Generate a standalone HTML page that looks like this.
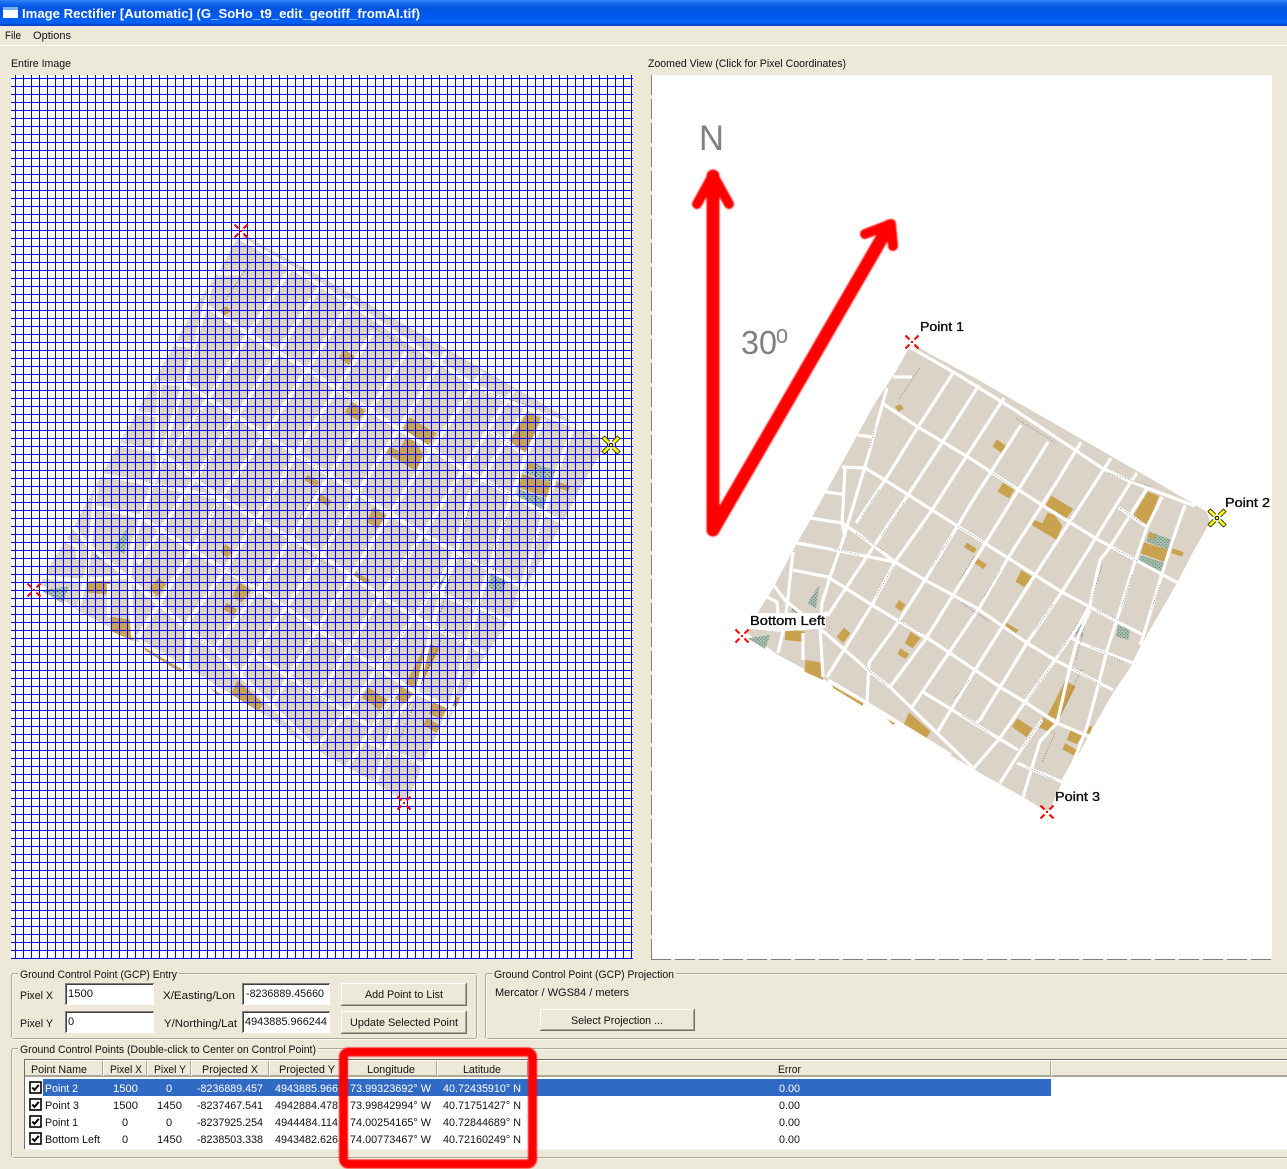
<!DOCTYPE html>
<html><head><meta charset="utf-8"><title>Image Rectifier</title>
<style>
html,body{margin:0;padding:0;background:#ece9d8;width:1287px;height:1169px;overflow:hidden}
svg{display:block}
text{font-family:"Liberation Sans",sans-serif;font-size:11px;fill:#111}
.w{fill:#fff}
</style></head><body>
<svg xmlns="http://www.w3.org/2000/svg" width="1287" height="1169" viewBox="0 0 1287 1169">
<defs>
<linearGradient id="tb" x1="0" y1="0" x2="0" y2="1">
<stop offset="0" stop-color="#2f86f5"/><stop offset=".1" stop-color="#1a6ff0"/><stop offset=".3" stop-color="#0054e0"/><stop offset=".6" stop-color="#0058ec"/><stop offset=".88" stop-color="#0063fa"/><stop offset=".94" stop-color="#0049d0"/><stop offset="1" stop-color="#0040c0"/>
</linearGradient>
<pattern id="grid" patternUnits="userSpaceOnUse" x="15" y="78" width="8" height="8" shape-rendering="crispEdges">
<rect x="0" y="0" width="1" height="8" fill="#0000ff"/><rect x="0" y="0" width="8" height="1" fill="#0000ff"/>
</pattern>
<pattern id="dots" patternUnits="userSpaceOnUse" width="10" height="10">
<rect width="10" height="10" fill="#a9c0b0"/><circle cx="3" cy="3" r="1.4" fill="#2f4f44"/><circle cx="8" cy="8" r="1.4" fill="#2f4f44"/>
</pattern>
<filter id="bl" x="-10%" y="-10%" width="120%" height="120%"><feGaussianBlur stdDeviation=".7"/></filter>
<g id="map">
<path fill="#dcd3c8" d="M908 350L895 373L885 388L875 403L842 463L812 517L797 543L772 590L755 617L747 633L778 655L825 680L980 773L998 783L1023 797L1047 812L1052 805L1062 782L1073 765L1090 733L1113 693L1130 668L1137 653L1147 635L1177 583L1193 552L1210 522L1207 512L1153 480L975 378L928 353L915 345Z"/>
<g transform="matrix(.351 0 0 .3333 730 310)">
<g fill="#c9a24f">
<path d="M470 290L485 282L495 295L480 305Z"/><path d="M760 388L790 410L775 430L748 410Z"/><path d="M778 518L810 540L795 565L762 545Z"/><path d="M915 557L978 597L955 630L897 590Z"/><path d="M905 608L925 615L947 648L930 690L860 645L868 630L890 640Z"/><path d="M1190 545L1222 558L1190 650L1150 615Z"/><path d="M1260 715L1293 727L1288 740L1258 730Z"/><path d="M675 698L703 716L695 730L667 712Z"/><path d="M700 742L732 764L722 777L692 757Z"/><path d="M830 780L860 800L838 832L813 815Z"/><path d="M785 937L822 960L812 972L780 950Z"/><path d="M482 870L500 885L487 905L470 890Z"/><path d="M325 953L343 970L322 1000L304 980Z"/><path d="M515 965L543 985L520 1015L498 1000Z"/><path d="M485 1015L510 1032L500 1047L477 1032Z"/><path d="M158 957L213 965L210 996L157 990Z"/><path d="M215 1050L262 1058L265 1110L212 1085Z"/><path d="M290 1125L380 1180L378 1188L295 1135Z"/><path d="M445 1225L470 1240L465 1245Z"/><path d="M510 1207L572 1265L558 1287L494 1245Z"/><path d="M955 1112L985 1130L935 1230L905 1215Z"/><path d="M818 1225L862 1255L845 1282L803 1250Z"/><path d="M893 1222L930 1245L915 1270L880 1252Z"/><path d="M970 1260L1003 1278L988 1303L960 1290Z"/><path d="M955 1300L988 1320L978 1337L947 1318Z"/><path d="M1020 1248L1032 1250L1025 1272L1015 1270Z"/>
</g>
<g fill="url(#dots)">
<path d="M1195 665L1260 690L1250 720L1185 695Z"/><path d="M1170 735L1240 760L1230 785L1165 755Z"/><path d="M1105 945L1140 960L1135 990L1100 980Z"/><path d="M255 825L245 895L220 880Z"/><path d="M50 985L115 975L100 1017Z"/><path d="M985 950L1005 940L1005 980L985 978Z"/><path d="M178 890L195 910L175 905Z"/>
</g>
<path fill="#c9a24f" d="M1180 697L1250 720L1240 757L1170 730Z"/><path fill="#c9a24f" d="M1190 670L1212 672L1210 687L1190 683Z"/>
</g>
<g fill="none" stroke="#fff" stroke-width="3.2" stroke-linejoin="round">
<path d="M908 346L955 373L1015 410L1102 468L1127 480L1150 489L1195 506"/>
<path d="M882 403L918 427L968 457L1042 505L1095 538L1178 583"/>
<path d="M842 467L865 468L885 480L932 510L975 537L1008 558L1035 575L1062 592L1090 607L1143 635"/>
<path d="M797 543L835 550L895 562L925 580L975 607L1027 643L1055 660L1113 690"/>
<path d="M1070 637L1080 643L1133 663"/>
<path d="M793 570L828 577L872 605L935 643L975 670L1000 687L1025 702L1057 723L1090 737"/>
<path d="M772 583L785 600L825 633L845 650L868 670L891 688L937 733L972 767"/>
<path d="M923 692L980 727L1018 750"/>
<path d="M1017 763L1062 782"/>
<path d="M828 680L867 703L951 755"/>
<path d="M1118 507L1147 527"/>
<path d="M953 373L918 427L885 480L856 523"/>
<path d="M979 385L942 443L908 495L878 540L828 615L825 612"/>
<path d="M1004 398L975 443L932 510L895 562L872 605L827 677"/>
<path d="M1021 425L975 497L925 580L895 627L869 663L867 703"/>
<path d="M1048 442L952 597L925 640L890 687"/>
<path d="M1081 442L1058 480L1008 558L980 607L912 707"/>
<path d="M1111 458L1097 480L1035 575L980 662L937 733"/>
<path d="M1137 473L1130 483L1062 592L1027 643L980 720L976 723"/>
<path d="M1148 487L1108 550L1100 560L1090 605L1080 623L1055 660L1025 702L1000 738L972 770"/>
<path d="M1090 610L1078 637L1070 667L1057 723L1040 741L1023 797"/>
<path d="M1162 497L1147 527L1133 567L1120 610L1108 647L1097 690L1087 727L1073 763L1062 782"/>
<path d="M1185 505L1172 542L1161 577L1143 637L1140 645"/>
<path d="M1000 783L1023 747L1042 720"/>
<path d="M887 388L878 420L867 460L842 543L830 577L822 603L820 627L823 677"/>
<path d="M893 377L912 377"/><path d="M858 435L872 437"/><path d="M825 492L842 494"/>
<path d="M810 518L842 523L857 533L895 562"/>
<path d="M845 467L843 507L842 523L845 537"/>
<path d="M793 552L788 597L785 623L778 653"/>
<path d="M767 597L777 602L778 613"/>
<path d="M803 633L803 660"/>
<path d="M748 627L778 630L822 627"/>
</g>
<g transform="matrix(.351 0 0 .3333 730 310)" fill="none" stroke="#333" stroke-width="2.5" stroke-dasharray="3 5" opacity=".55">
<path d="M815 325L925 397M1080 490L1200 530M415 350L395 420M540 175L480 270M750 490L810 535M650 650L720 695M360 670L435 720M295 715L370 735M425 540L375 620M495 580L430 680M630 680L575 770M465 770L415 860M695 740L655 810M770 780L720 865M660 880L740 935M480 930L545 970M1045 900L1115 935M1030 1010L1120 1055M975 1075L1055 1125M385 1070L445 1125M680 1110L640 1165M660 1215L740 1270M845 1370L925 1410M1060 765L1030 870M1145 795L1115 890M1225 825L1200 900M920 885L870 960M990 940L935 1035M1010 950L985 1050M910 1075L850 1165M1000 1080L940 1220M885 1235L835 1310M925 1270L890 1355M1105 590L1175 640M1095 715L1165 755"/>
</g>
</g>
<g id="xr" fill="none" stroke="#f00" stroke-width="2"><path d="M-6.5 -6.5L-2.5 -2.5M6.5 -6.5L2.5 -2.5M-6.5 6.5L-2.5 2.5M6.5 6.5L2.5 2.5"/><rect x="-1" y="-1" width="2" height="2" fill="#f00" stroke="none"/></g>
<g id="xy" fill="none"><path stroke="#000" stroke-width="4.4" d="M-8 -8L-2.5 -2.5M8 -8L2.5 -2.5M-8 8L-2.5 2.5M8 8L2.5 2.5"/><path stroke="#ff0" stroke-width="3" d="M-7.5 -7.5L-2.5 -2.5M7.5 -7.5L2.5 -2.5M-7.5 7.5L-2.5 2.5M7.5 7.5L2.5 2.5"/><circle r="1.8" fill="#ff0" stroke="#000"/></g>
<g id="ck"><rect x="-5.5" y="-5.5" width="11" height="11" fill="#fff" stroke="#000" stroke-width="1.6"/><path d="M-3.2 0L-1 2.4L3.3 -2.6" fill="none" stroke="#000" stroke-width="2"/></g>
</defs>

<rect width="1287" height="1169" fill="#ece9d8"/>
<rect width="1287" height="26" fill="url(#tb)"/>
<rect x="3" y="7" width="15" height="11" fill="#fff"/><rect x="3" y="7" width="15" height="3" fill="#7fb0f5"/>
<text x="22" y="18" style="font-size:13px;font-weight:bold;fill:#fff" textLength="398" lengthAdjust="spacingAndGlyphs">Image Rectifier [Automatic] (G_SoHo_t9_edit_geotiff_fromAI.tif)</text>
<rect y="45" width="1287" height="1" fill="#fff"/>
<text x="5" y="39" textLength="16" lengthAdjust="spacingAndGlyphs">File</text>
<text x="33" y="39" textLength="38" lengthAdjust="spacingAndGlyphs">Options</text>
<text x="11" y="67" textLength="60" lengthAdjust="spacingAndGlyphs">Entire Image</text>
<text x="648" y="67" textLength="198" lengthAdjust="spacingAndGlyphs">Zoomed View (Click for Pixel Coordinates)</text>

<rect x="11" y="75" width="622" height="884" fill="#fff"/>
<g transform="matrix(1.2131 0 0 1.2131 -865.4 -183.9)"><use href="#map"/></g>
<rect x="11" y="75" width="622" height="884" fill="url(#grid)"/>
<use href="#xr" x="241" y="231"/><use href="#xy" x="611" y="445"/><use href="#xr" x="404" y="803"/><use href="#xr" x="34" y="590"/>

<rect x="652" y="75" width="620" height="884" fill="#fff"/>
<path d="M651.5 75V959M651 959.5H1272" stroke="#808080" stroke-width="1" stroke-dasharray="20 4" fill="none"/>
<use href="#map"/>
<use href="#xr" x="912" y="342"/><use href="#xy" x="1217" y="518"/><use href="#xr" x="1047" y="812"/><use href="#xr" x="742" y="636"/>
<rect x="749" y="613" width="77" height="15" fill="#fff"/>
<text x="920" y="331" style="font-size:13px;stroke:#000;stroke-width:.35" textLength="44" lengthAdjust="spacingAndGlyphs">Point 1</text>
<text x="1225" y="507" style="font-size:13px;stroke:#000;stroke-width:.35" textLength="45" lengthAdjust="spacingAndGlyphs">Point 2</text>
<text x="1055" y="801" style="font-size:13px;stroke:#000;stroke-width:.35" textLength="45" lengthAdjust="spacingAndGlyphs">Point 3</text>
<text x="750" y="625" style="font-size:13px;stroke:#000;stroke-width:.35" textLength="75" lengthAdjust="spacingAndGlyphs">Bottom Left</text>
<text x="699" y="150" style="font-size:35px;fill:#808080" textLength="25" lengthAdjust="spacingAndGlyphs">N</text>
<text x="741" y="354" style="font-size:33px;fill:#808080" textLength="36" lengthAdjust="spacingAndGlyphs">30</text>
<text x="776" y="343" style="font-size:20px;fill:#808080" textLength="12" lengthAdjust="spacingAndGlyphs">0</text>
<g fill="none" stroke="#f00" stroke-width="13" stroke-linecap="round" stroke-linejoin="round" filter="url(#bl)">
<path d="M713 530V176"/><path d="M697 204L713 175L729 204" stroke-width="10"/>
<path d="M713 530L889 226"/><path d="M865 234L891 224L893 246" stroke-width="10"/>
</g>

<g fill="none">
<rect x="11.5" y="973.5" width="465" height="65" rx="2" stroke="#aca899"/><rect x="12.5" y="974.5" width="465" height="65" rx="2" stroke="#fff" opacity=".7"/>
<rect x="485.5" y="973.5" width="830" height="65" rx="2" stroke="#aca899"/><rect x="486.5" y="974.5" width="830" height="65" rx="2" stroke="#fff" opacity=".7"/>
<rect x="11.5" y="1048.5" width="1310" height="109" rx="2" stroke="#aca899"/><rect x="12.5" y="1049.5" width="1310" height="109" rx="2" stroke="#fff" opacity=".7"/>
</g>
<rect x="18" y="968" width="160" height="10" fill="#ece9d8"/><rect x="492" y="968" width="184" height="10" fill="#ece9d8"/><rect x="18" y="1043" width="300" height="10" fill="#ece9d8"/>
<text x="20" y="978" textLength="157" lengthAdjust="spacingAndGlyphs">Ground Control Point (GCP) Entry</text>
<text x="494" y="978" textLength="180" lengthAdjust="spacingAndGlyphs">Ground Control Point (GCP) Projection</text>
<text x="20" y="1053" textLength="296" lengthAdjust="spacingAndGlyphs">Ground Control Points (Double-click to Center on Control Point)</text>

<rect x="65" y="983" width="89" height="22" fill="#fff"/><path d="M65.5 1005V983.5H154" stroke="#808080" fill="none"/><path d="M66.5 1004V984.5H153" stroke="#404040" fill="none"/>
<rect x="65" y="1011" width="89" height="22" fill="#fff"/><path d="M65.5 1033V1011.5H154" stroke="#808080" fill="none"/><path d="M66.5 1032V1012.5H153" stroke="#404040" fill="none"/>
<rect x="242" y="983" width="88" height="22" fill="#fff"/><path d="M242.5 1005V983.5H330" stroke="#808080" fill="none"/><path d="M243.5 1004V984.5H329" stroke="#404040" fill="none"/>
<rect x="242" y="1011" width="88" height="22" fill="#fff"/><path d="M242.5 1033V1011.5H330" stroke="#808080" fill="none"/><path d="M243.5 1032V1012.5H329" stroke="#404040" fill="none"/>
<text x="20" y="999" textLength="33" lengthAdjust="spacingAndGlyphs">Pixel X</text>
<text x="20" y="1027" textLength="33" lengthAdjust="spacingAndGlyphs">Pixel Y</text>
<text x="68" y="997" textLength="25" lengthAdjust="spacingAndGlyphs">1500</text>
<text x="68" y="1025">0</text>
<text x="163" y="999" textLength="72" lengthAdjust="spacingAndGlyphs">X/Easting/Lon</text>
<text x="164" y="1027" textLength="73" lengthAdjust="spacingAndGlyphs">Y/Northing/Lat</text>
<text x="246" y="997" textLength="78" lengthAdjust="spacingAndGlyphs">-8236889.45660</text>
<text x="245" y="1025" textLength="82" lengthAdjust="spacingAndGlyphs">4943885.966244</text>

<g fill="none">
<path d="M341.5 1006V983.5H467" stroke="#fff"/><path d="M341 1005.5H466.5V983" stroke="#716f64"/><path d="M342 1004.5H465.5V984" stroke="#aca899"/>
<path d="M341.5 1034V1011.5H467" stroke="#fff"/><path d="M341 1033.5H466.5V1011" stroke="#716f64"/><path d="M342 1032.5H465.5V1012" stroke="#aca899"/>
<path d="M540.5 1031V1009.5H695" stroke="#fff"/><path d="M540 1030.5H694.5V1009" stroke="#716f64"/><path d="M541 1029.5H693.5V1010" stroke="#aca899"/>
</g>
<text x="365" y="998" textLength="78" lengthAdjust="spacingAndGlyphs">Add Point to List</text>
<text x="350" y="1026" textLength="108" lengthAdjust="spacingAndGlyphs">Update Selected Point</text>
<text x="495" y="996" textLength="134" lengthAdjust="spacingAndGlyphs">Mercator / WGS84 / meters</text>
<text x="571" y="1024" textLength="92" lengthAdjust="spacingAndGlyphs">Select Projection ...</text>

<rect x="24" y="1059" width="1263" height="90" fill="#fff"/>
<rect x="25" y="1060" width="1262" height="16" fill="#ece9d8"/>
<rect x="24" y="1059" width="1263" height="1" fill="#716f64"/><rect x="24" y="1059" width="1" height="90" fill="#716f64"/>
<rect x="25" y="1060" width="1262" height="1" fill="#fff"/>
<rect x="25" y="1075" width="1262" height="2" fill="#aca899"/>
<rect y="1149" x="24" width="1263" height="1" fill="#f5f3ea"/>
<g fill="#aca899">
<rect x="102" y="1061" width="1" height="15"/><rect x="146" y="1061" width="1" height="15"/><rect x="190" y="1061" width="1" height="15"/><rect x="268" y="1061" width="1" height="15"/><rect x="347" y="1061" width="1" height="15"/><rect x="436" y="1061" width="1" height="15"/><rect x="527" y="1061" width="1" height="15"/><rect x="1050" y="1061" width="1" height="15"/>
</g>
<g fill="#fff">
<rect x="103" y="1061" width="1" height="15"/><rect x="147" y="1061" width="1" height="15"/><rect x="191" y="1061" width="1" height="15"/><rect x="269" y="1061" width="1" height="15"/><rect x="348" y="1061" width="1" height="15"/><rect x="437" y="1061" width="1" height="15"/><rect x="528" y="1061" width="1" height="15"/><rect x="1051" y="1061" width="1" height="15"/>
</g>
<text x="31" y="1073" textLength="56" lengthAdjust="spacingAndGlyphs">Point Name</text>
<text x="110" y="1073" textLength="32" lengthAdjust="spacingAndGlyphs">Pixel X</text>
<text x="154" y="1073" textLength="32" lengthAdjust="spacingAndGlyphs">Pixel Y</text>
<text x="202" y="1073" textLength="56" lengthAdjust="spacingAndGlyphs">Projected X</text>
<text x="279" y="1073" textLength="56" lengthAdjust="spacingAndGlyphs">Projected Y</text>
<text x="367" y="1073" textLength="48" lengthAdjust="spacingAndGlyphs">Longitude</text>
<text x="463" y="1073" textLength="38" lengthAdjust="spacingAndGlyphs">Latitude</text>
<text x="778" y="1073" textLength="23" lengthAdjust="spacingAndGlyphs">Error</text>

<rect x="43" y="1079" width="1008" height="17" fill="#316ac5"/>
<use href="#ck" x="35.5" y="1087.5"/><use href="#ck" x="35.5" y="1104.5"/><use href="#ck" x="35.5" y="1121.5"/><use href="#ck" x="35.5" y="1138.5"/>

<text class="w" x="45" y="1092" textLength="33" lengthAdjust="spacingAndGlyphs">Point 2</text>
<text class="w" x="113" y="1092" textLength="25" lengthAdjust="spacingAndGlyphs">1500</text>
<text class="w" x="166" y="1092">0</text>
<text class="w" x="197" y="1092" textLength="66" lengthAdjust="spacingAndGlyphs">-8236889.457</text>
<text class="w" x="275" y="1092" textLength="63" lengthAdjust="spacingAndGlyphs">4943885.966</text>
<text class="w" x="350" y="1092" textLength="81" lengthAdjust="spacingAndGlyphs">73.99323692° W</text>
<text class="w" x="443" y="1092" textLength="78" lengthAdjust="spacingAndGlyphs">40.72435910° N</text>
<text class="w" x="779" y="1092" textLength="21" lengthAdjust="spacingAndGlyphs">0.00</text>

<text x="45" y="1109" textLength="34" lengthAdjust="spacingAndGlyphs">Point 3</text>
<text x="113" y="1109" textLength="25" lengthAdjust="spacingAndGlyphs">1500</text>
<text x="157" y="1109" textLength="25" lengthAdjust="spacingAndGlyphs">1450</text>
<text x="197" y="1109" textLength="66" lengthAdjust="spacingAndGlyphs">-8237467.541</text>
<text x="275" y="1109" textLength="63" lengthAdjust="spacingAndGlyphs">4942884.478</text>
<text x="350" y="1109" textLength="81" lengthAdjust="spacingAndGlyphs">73.99842994° W</text>
<text x="443" y="1109" textLength="78" lengthAdjust="spacingAndGlyphs">40.71751427° N</text>
<text x="779" y="1109" textLength="21" lengthAdjust="spacingAndGlyphs">0.00</text>

<text x="45" y="1126" textLength="33" lengthAdjust="spacingAndGlyphs">Point 1</text>
<text x="122" y="1126">0</text>
<text x="166" y="1126">0</text>
<text x="197" y="1126" textLength="66" lengthAdjust="spacingAndGlyphs">-8237925.254</text>
<text x="275" y="1126" textLength="63" lengthAdjust="spacingAndGlyphs">4944484.114</text>
<text x="350" y="1126" textLength="81" lengthAdjust="spacingAndGlyphs">74.00254165° W</text>
<text x="443" y="1126" textLength="78" lengthAdjust="spacingAndGlyphs">40.72844689° N</text>
<text x="779" y="1126" textLength="21" lengthAdjust="spacingAndGlyphs">0.00</text>

<text x="45" y="1143" textLength="55" lengthAdjust="spacingAndGlyphs">Bottom Left</text>
<text x="122" y="1143">0</text>
<text x="157" y="1143" textLength="25" lengthAdjust="spacingAndGlyphs">1450</text>
<text x="197" y="1143" textLength="66" lengthAdjust="spacingAndGlyphs">-8238503.338</text>
<text x="275" y="1143" textLength="63" lengthAdjust="spacingAndGlyphs">4943482.626</text>
<text x="350" y="1143" textLength="81" lengthAdjust="spacingAndGlyphs">74.00773467° W</text>
<text x="443" y="1143" textLength="78" lengthAdjust="spacingAndGlyphs">40.72160249° N</text>
<text x="779" y="1143" textLength="21" lengthAdjust="spacingAndGlyphs">0.00</text>

<rect x="343.5" y="1052" width="189" height="112" rx="5" fill="none" stroke="#f00" stroke-width="9" filter="url(#bl)"/>
</svg>
</body></html>
